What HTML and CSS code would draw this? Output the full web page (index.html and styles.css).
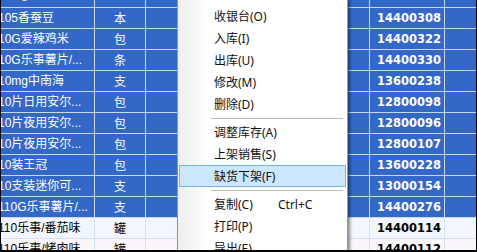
FILE: index.html
```html
<!DOCTYPE html>
<html lang="zh-CN">
<head>
  <meta charset="UTF-8" />
  <title>商品列表</title>
  <link rel="stylesheet" href="styles.css">
</head>
<body>
  <div class="frame">
    <div class="grid">
      <div class="row first"><div class="cell name">10.5g薄荷糖</div><div class="cell unit">包</div><div class="cell blank"></div><div class="cell code">14400301</div><div class="cell end"></div></div>
      <div class="row"><div class="cell name">105香蚕豆</div><div class="cell unit">本</div><div class="cell blank"></div><div class="cell code">14400308</div><div class="cell end"></div></div>
      <div class="row"><div class="cell name">10G爱辣鸡米</div><div class="cell unit">包</div><div class="cell blank"></div><div class="cell code">14400322</div><div class="cell end"></div></div>
      <div class="row"><div class="cell name">10G乐事薯片/...</div><div class="cell unit">条</div><div class="cell blank"></div><div class="cell code">14400330</div><div class="cell end"></div></div>
      <div class="row"><div class="cell name">10mg中南海</div><div class="cell unit">支</div><div class="cell blank"></div><div class="cell code">13600238</div><div class="cell end"></div></div>
      <div class="row"><div class="cell name">10片日用安尔...</div><div class="cell unit">包</div><div class="cell blank"></div><div class="cell code">12800098</div><div class="cell end"></div></div>
      <div class="row"><div class="cell name">10片夜用安尔...</div><div class="cell unit">包</div><div class="cell blank"></div><div class="cell code">12800096</div><div class="cell end"></div></div>
      <div class="row"><div class="cell name">10片夜用安尔...</div><div class="cell unit">包</div><div class="cell blank"></div><div class="cell code">12800107</div><div class="cell end"></div></div>
      <div class="row"><div class="cell name">10装王冠</div><div class="cell unit">包</div><div class="cell blank"></div><div class="cell code">13600228</div><div class="cell end"></div></div>
      <div class="row"><div class="cell name">10支装迷你可...</div><div class="cell unit">支</div><div class="cell blank"></div><div class="cell code">13000154</div><div class="cell end"></div></div>
      <div class="row"><div class="cell name">110G乐事薯片/...</div><div class="cell unit">支</div><div class="cell blank"></div><div class="cell code">14400276</div><div class="cell end"></div></div>
      <div class="row plain"><div class="cell name">110乐事/番茄味</div><div class="cell unit">罐</div><div class="cell blank"></div><div class="cell code">14400114</div><div class="cell end"></div></div>
      <div class="row plain alt"><div class="cell name">110乐事/烤肉味</div><div class="cell unit">罐</div><div class="cell blank"></div><div class="cell code">14400112</div><div class="cell end"></div></div>
    </div>

    <div class="menu">
      <div class="menu-item">收银台(O)</div>
      <div class="menu-item">入库(I)</div>
      <div class="menu-item">出库(U)</div>
      <div class="menu-item">修改(M)</div>
      <div class="menu-item">删除(D)</div>
      <div class="menu-sep"></div>
      <div class="menu-item">调整库存(A)</div>
      <div class="menu-item">上架销售(S)</div>
      <div class="menu-item active">缺货下架(F)</div>
      <div class="menu-sep"></div>
      <div class="menu-item"><span class="label">复制(C)</span><span class="shortcut">Ctrl+C</span></div>
      <div class="menu-item">打印(P)</div>
      <div class="menu-item">导出(E)</div>
    </div>
  </div>
</body>
</html>
```

FILE: styles.css
```css
body {
  margin: 0;
  background: #000000;
  font-family: "Liberation Sans", "Noto Sans CJK SC", sans-serif;
  font-size: 12px;
}

.frame {
  position: relative;
  width: 475px;
  height: 250px;
  margin-left: 1px;
  overflow: hidden;
  background: #fbf6fb;
}

.grid {
  display: flex;
  flex-direction: column;
  margin-top: -13px;
}

.row {
  display: grid;
  grid-template-columns: 94px 51px 224px 75px 31px;
  height: 21px;
  background: #3368c9;
  color: #ffffff;
}

.row.first .cell {
  line-height: 14px;
}

.row.plain {
  background: #f2f7ff;
  color: #000000;
}

.row.plain.alt {
  background: #fbf6fb;
}

.cell {
  border-bottom: 1px solid #c9d7ef;
  border-right: 1px solid #c9d7ef;
  line-height: 20px;
  white-space: nowrap;
  overflow: hidden;
}

.row.plain .cell {
  border-color: #d6e2f4;
}

.cell.end {
  border-right: none;
}

.name {
  text-indent: -3px;
}

.unit {
  text-align: center;
  font-family: "Noto Sans CJK SC", sans-serif;
}

.code {
  text-align: right;
  padding-right: 3px;
  font-family: "DejaVu Sans", sans-serif;
  font-weight: bold;
  font-size: 11.5px;
}

.menu {
  position: absolute;
  left: 176px;
  top: -1px;
  width: 167px;
  height: 270px;
  padding: 5px 1px 0 1px;
  border: 1px solid #979797;
  background: linear-gradient(to right, #eeeeee 0, #fbfbfb 24px, #ffffff 30px);
  box-shadow: 2px 2px 3px rgba(0, 0, 0, 0.45);
  font-family: "Noto Sans", "Noto Sans CJK SC", sans-serif;
  font-size: 12px;
  color: #111111;
}

.menu-item {
  display: flex;
  align-items: center;
  height: 22px;
  padding-left: 34px;
  border: 1px solid transparent;
  box-sizing: border-box;
}

.menu-item.active {
  background: #cce6fd;
  border-color: #7ab4ee;
}

.menu-item .label {
  width: 64px;
}

.menu-sep {
  height: 6px;
  margin-left: 32px;
  margin-right: 3px;
  display: flex;
  align-items: center;
}

.menu-sep::before {
  content: "";
  flex: 1;
  height: 1px;
  background: #bdbdbd;
  box-shadow: 0 1px 0 #ffffff;
}
```
